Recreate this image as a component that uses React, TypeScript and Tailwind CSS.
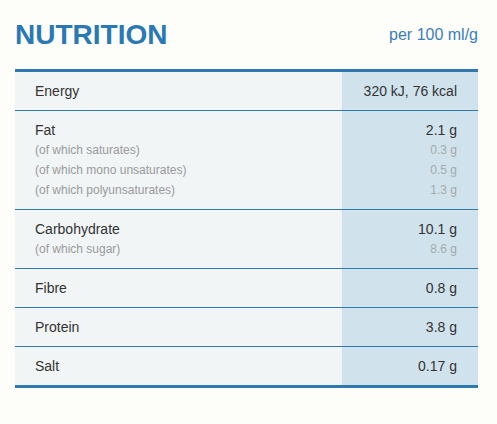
type Row = {
  label: string;
  value: string;
  subs?: { label: string; value: string }[];
};

const rows: Row[] = [
  { label: "Energy", value: "320 kJ, 76 kcal" },
  {
    label: "Fat",
    value: "2.1 g",
    subs: [
      { label: "(of which saturates)", value: "0.3 g" },
      { label: "(of which mono unsaturates)", value: "0.5 g" },
      { label: "(of which polyunsaturates)", value: "1.3 g" },
    ],
  },
  {
    label: "Carbohydrate",
    value: "10.1 g",
    subs: [{ label: "(of which sugar)", value: "8.6 g" }],
  },
  { label: "Fibre", value: "0.8 g" },
  { label: "Protein", value: "3.8 g" },
  { label: "Salt", value: "0.17 g" },
];

export default function App() {
  return (
    <div className="w-[497px] h-[424px] bg-[#fdfdfa] pl-[15px] pr-[19px] font-['Liberation_Sans',Arial,sans-serif]">
      <div className="flex justify-between h-[69px]">
        <h1 className="mt-[19px] text-[28px] leading-[32px] font-bold text-[#2a78b4]">
          NUTRITION
        </h1>
        <span className="mt-[26px] text-[16px] leading-[18px] text-[#3a7db8]">
          per 100 ml/g
        </span>
      </div>
      <div className="border-t-[3px] border-b-[3px] border-[#2f78b0]">
        {rows.map((row, index) => {
          const { label, value, subs } = row;
          const last = index === rows.length - 1;
          return (
            <div
              key={index}
              className={
                last
                  ? "grid grid-cols-[1fr_136px]"
                  : "grid grid-cols-[1fr_136px] border-b border-b-[#2f78b0]"
              }
            >
              <div className="bg-[#f1f5f6] pl-[20px] pt-[9px] pb-[9px]">
                <div className="text-[14px] leading-[20px] text-[#333]">{label}</div>
                {subs?.map((sub, i) => (
                  <div key={i} className="text-[12px] leading-[20px] text-[#9a9a9a]">
                    {sub.label}
                  </div>
                ))}
              </div>
              <div className="bg-[#d0e2eb] pr-[21px] pt-[9px] pb-[9px] text-right">
                <div className="text-[14px] leading-[20px] text-[#333]">{value}</div>
                {subs?.map((sub, i) => (
                  <div key={i} className="text-[12px] leading-[20px] text-[#a5a9ab]">
                    {sub.value}
                  </div>
                ))}
              </div>
            </div>
          );
        })}
      </div>
    </div>
  );
}
